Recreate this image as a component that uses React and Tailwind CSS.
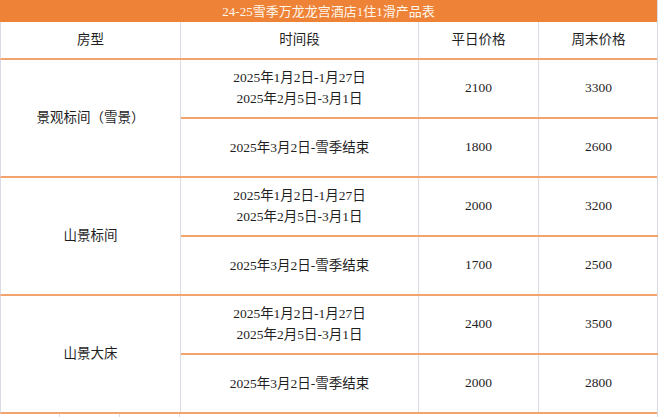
const groups = [
  {
    room: '景观标间（雪景）',
    rows: [
      { dates: ['2025年1月2日-1月27日', '2025年2月5日-3月1日'], weekday: '2100', weekend: '3300' },
      { dates: ['2025年3月2日-雪季结束'], weekday: '1800', weekend: '2600' },
    ],
  },
  {
    room: '山景标间',
    rows: [
      { dates: ['2025年1月2日-1月27日', '2025年2月5日-3月1日'], weekday: '2000', weekend: '3200' },
      { dates: ['2025年3月2日-雪季结束'], weekday: '1700', weekend: '2500' },
    ],
  },
  {
    room: '山景大床',
    rows: [
      { dates: ['2025年1月2日-1月27日', '2025年2月5日-3月1日'], weekday: '2400', weekend: '3500' },
      { dates: ['2025年3月2日-雪季结束'], weekday: '2000', weekend: '2800' },
    ],
  },
];

const font = { fontFamily: '"Liberation Serif", "Noto Sans CJK SC", serif' };

export default function App() {
  return (
    <div className="relative h-[417px] w-[660px] overflow-hidden bg-white text-[13.5px] text-[#1f1f1f]" style={font}>
      <div className="w-[658px] border-r border-r-[#d9dce4]">
        <div className="flex h-[22px] items-center justify-center bg-[#ee8236] text-[13px] leading-none text-[#fff6ec]">
          24-25雪季万龙龙宫酒店1住1滑产品表
        </div>

        <div className="grid h-[38px] grid-cols-[180px_238px_120px_119px] border-b-2 border-b-[#f2a46f] border-l border-l-[#d9dce4]">
          <div className="flex items-center justify-center border-r border-r-[#d9dce4]">房型</div>
          <div className="flex items-center justify-center border-r border-r-[#d9dce4]">时间段</div>
          <div className="flex items-center justify-center border-r border-r-[#d9dce4]">平日价格</div>
          <div className="flex items-center justify-center">周末价格</div>
        </div>

        {groups.map((g) => (
          <div
            key={g.room}
            className="grid grid-cols-[180px_238px_120px_119px] grid-rows-[59px_57px] border-b-2 border-b-[#f2a46f] border-l border-l-[#d9dce4]"
          >
            <div className="row-span-2 flex items-center justify-center border-r border-r-[#d9dce4]">{g.room}</div>
            {g.rows.map((r, i) => (
              <div
                key={i}
                className={`col-span-3 grid grid-cols-[238px_120px_119px] ${i === 0 ? 'border-b-2 border-b-[#f2a46f]' : ''}`}
              >
                <div className="flex flex-col items-center justify-center gap-[5px] border-r border-r-[#d9dce4] leading-[16px]">
                  {r.dates.map((d) => (
                    <span key={d}>{d}</span>
                  ))}
                </div>
                <div className="flex items-center justify-center border-r border-r-[#d9dce4]">{r.weekday}</div>
                <div className="flex items-center justify-center">{r.weekend}</div>
              </div>
            ))}
          </div>
        ))}

        <div className="grid h-[4px] grid-cols-[60px_60px_60px_60px]">
          <div className="border-r border-r-[#d9dce4]" />
          <div className="border-r border-r-[#d9dce4]" />
          <div className="border-r border-r-[#d9dce4]" />
        </div>
      </div>
    </div>
  );
}
